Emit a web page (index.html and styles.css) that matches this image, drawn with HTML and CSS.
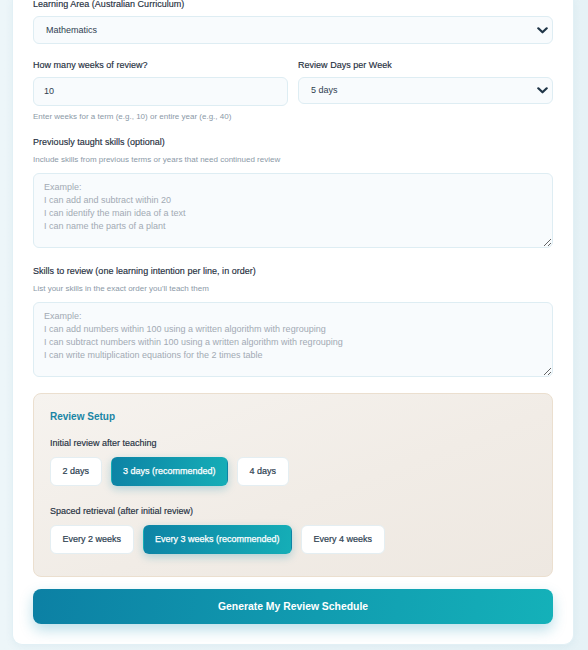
FILE: index.html
```html
<!DOCTYPE html>
<html lang="en">
<head>
<meta charset="utf-8">
<title>Review Schedule</title>
<link rel="stylesheet" href="styles.css">
</head>
<body>
<div class="page">
  <div class="card">
    <div class="field f-area">
      <div class="label first">Learning Area (Australian Curriculum)</div>
      <div class="select">
        <span>Mathematics</span>
        <svg class="chev" width="11" height="7" viewBox="0 0 11 7"><path d="M1.3 1.3 5.5 5.3 9.7 1.3" fill="none" stroke="#1f3547" stroke-width="2.2" stroke-linecap="round" stroke-linejoin="round"/></svg>
      </div>
    </div>

    <div class="row f-weeks">
      <div class="col">
        <div class="label">How many weeks of review?</div>
        <input class="input" type="text" value="10">
        <div class="hint below">Enter weeks for a term (e.g., 10) or entire year (e.g., 40)</div>
      </div>
      <div class="col">
        <div class="label">Review Days per Week</div>
        <div class="select short">
          <span>5 days</span>
          <svg class="chev" width="11" height="7" viewBox="0 0 11 7"><path d="M1.3 1.3 5.5 5.3 9.7 1.3" fill="none" stroke="#1f3547" stroke-width="2.2" stroke-linecap="round" stroke-linejoin="round"/></svg>
        </div>
      </div>
    </div>

    <div class="field f-prev">
      <div class="label">Previously taught skills (optional)</div>
      <div class="hint above">Include skills from previous terms or years that need continued review</div>
      <textarea class="area" placeholder="Example:&#10;I can add and subtract within 20&#10;I can identify the main idea of a text&#10;I can name the parts of a plant"></textarea>
    </div>

    <div class="field f-skills">
      <div class="label">Skills to review (one learning intention per line, in order)</div>
      <div class="hint above">List your skills in the exact order you'll teach them</div>
      <textarea class="area" placeholder="Example:&#10;I can add numbers within 100 using a written algorithm with regrouping&#10;I can subtract numbers within 100 using a written algorithm with regrouping&#10;I can write multiplication equations for the 2 times table"></textarea>
    </div>

    <div class="setup">
      <div class="setup-title">Review Setup</div>
      <div class="group first-group">
        <div class="sub">Initial review after teaching</div>
        <div class="chips">
          <div class="chip">2 days</div>
          <div class="chip active">3 days (recommended)</div>
          <div class="chip">4 days</div>
        </div>
      </div>
      <div class="group">
        <div class="sub">Spaced retrieval (after initial review)</div>
        <div class="chips">
          <div class="chip">Every 2 weeks</div>
          <div class="chip active">Every 3 weeks (recommended)</div>
          <div class="chip">Every 4 weeks</div>
        </div>
      </div>
    </div>

    <div class="generate">Generate My Review Schedule</div>
  </div>
</div>
</body>
</html>
```

FILE: styles.css
```css
* { box-sizing: border-box; }

html, body {
  margin: 0;
  padding: 0;
}

body {
  background: linear-gradient(90deg, #edf6f9 0%, #eaf4f8 60%, #e6f2f6 100%);
  font-family: "Liberation Sans", Arial, sans-serif;
  color: #2c3e50;
  height: 650px;
  overflow: hidden;
}

.page {
  padding: 0 0 6px 12px;
}

.card {
  width: 562px;
  background: #ffffff;
  border: 1px solid #e2f0f5;
  border-top: none;
  border-radius: 0 0 10px 10px;
  box-shadow: 0 2px 8px rgba(30, 110, 140, 0.06);
  padding: 0 20px 20px 20px;
}

.label {
  font-size: 9px;
  line-height: 14px;
  color: #1f2f40;
  margin-bottom: 5px;
  letter-spacing: 0.02px;
  -webkit-text-stroke: 0.15px #1f2f40;
}

.label.first {
  margin-top: -3px;
}

.hint {
  font-size: 8px;
  line-height: 11px;
  color: #8b99a7;
}

.hint.below { margin-top: 5px; }
.hint.above { margin-top: 1px; margin-bottom: 7.5px; }

.f-area { margin-bottom: 13.5px; }
.f-weeks { margin-bottom: 13px; }
.f-prev { margin-bottom: 16.5px; }
.f-skills { margin-bottom: 16.5px; }

.row {
  display: grid;
  grid-template-columns: 1fr 1fr;
  column-gap: 10px;
}

.select {
  height: 28px;
  background: #f8fbfd;
  border: 1px solid #deedf3;
  border-radius: 6px;
  display: flex;
  align-items: center;
  justify-content: space-between;
  padding: 0 4px 0 12px;
  font-size: 9px;
  color: #2f3e50;
}

.select.short { height: 27.5px; }

.chev { display: block; }

.input {
  display: block;
  width: 100%;
  height: 29.5px;
  background: #f8fbfd;
  border: 1px solid #deedf3;
  border-radius: 6px;
  padding: 0 10px;
  font-family: "Liberation Sans", Arial, sans-serif;
  font-size: 9px;
  color: #2f3e50;
  outline: none;
  margin: 0;
}

.area {
  display: block;
  width: 100%;
  height: 75px;
  background: #f8fbfd;
  border: 1px solid #deedf3;
  border-radius: 6px;
  padding: 7px 10px;
  font-family: "Liberation Sans", Arial, sans-serif;
  font-size: 9px;
  line-height: 13.2px;
  color: #334155;
  margin: 0;
  outline: none;
}

.area::placeholder {
  color: #a2aab4;
}

.setup {
  background: linear-gradient(160deg, #f6f3ef 0%, #f1ece6 55%, #eee8e1 100%);
  border: 1px solid #ebdfcf;
  border-radius: 8px;
  padding: 16px 16px 22.7px 16px;
}

.setup-title {
  font-size: 10px;
  line-height: 13px;
  font-weight: bold;
  color: #1a85a5;
  margin-bottom: 14px;
}

.first-group { margin-bottom: 19.5px; }

.sub {
  font-size: 9px;
  line-height: 13px;
  color: #1f2f40;
  margin-bottom: 6.5px;
  -webkit-text-stroke: 0.15px #1f2f40;
}

.chips {
  display: flex;
  gap: 9px;
}

.chip {
  height: 29px;
  line-height: 27px;
  padding: 0 11.5px;
  background: #ffffff;
  border: 1px solid #e4eef2;
  border-radius: 6px;
  font-size: 9px;
  color: #2c3e50;
  white-space: nowrap;
  -webkit-text-stroke: 0.2px #2c3e50;
}

.chip.active {
  background: linear-gradient(100deg, #0d83a5 0%, #15aeb7 100%);
  border-color: transparent;
  color: #ffffff;
  -webkit-text-stroke: 0.25px #ffffff;
  box-shadow: 0 3px 8px rgba(14, 135, 168, 0.28);
}

.generate {
  margin-top: 12.3px;
  height: 35px;
  border-radius: 8px;
  background: linear-gradient(100deg, #0c80a4 0%, #119cb0 55%, #14b1b9 100%);
  box-shadow: 0 6px 14px rgba(16, 140, 175, 0.28);
  display: flex;
  align-items: center;
  justify-content: center;
  font-size: 10.4px;
  font-weight: bold;
  color: #ffffff;
}
```
